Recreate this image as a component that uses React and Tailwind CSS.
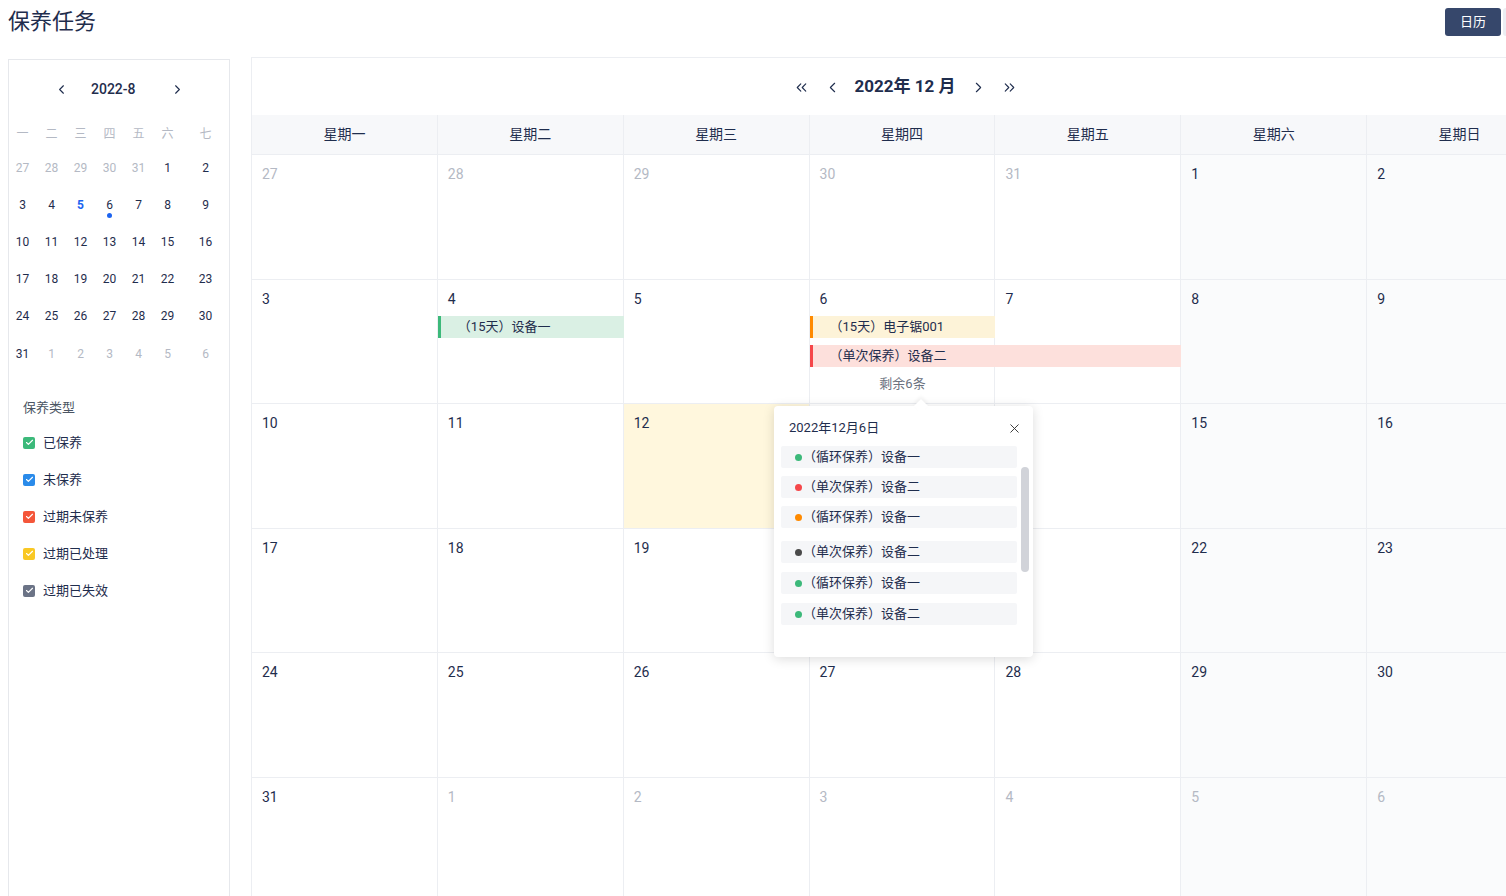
import React from "react";
import {
  ChevronLeft,
  ChevronRight,
  ChevronsLeft,
  ChevronsRight,
  X,
  Check,
} from "lucide-react";

const FONT = "font-['Roboto','Noto_Sans_CJK_SC',sans-serif]";

const colStart = [
  "col-start-1",
  "col-start-2",
  "col-start-3",
  "col-start-4",
  "col-start-5",
  "col-start-6",
  "col-start-7",
];

const weekNames = ["星期一", "星期二", "星期三", "星期四", "星期五", "星期六", "星期日"];

// December 2022, Monday first; "hidden" cells sit under the day popover
const weeks = [
  [27, 28, 29, 30, 31, 1, 2].map((d, i) => ({ d, out: i < 5 })),
  [3, 4, 5, 6, 7, 8, 9].map((d) => ({ d })),
  [10, 11, 12, 13, 14, 15, 16].map((d) => ({ d, today: d === 12, hidden: d === 13 })),
  [17, 18, 19, 20, 21, 22, 23].map((d) => ({ d, hidden: d === 20 })),
  [24, 25, 26, 27, 28, 29, 30].map((d) => ({ d })),
  [31, 1, 2, 3, 4, 5, 6].map((d, i) => ({ d, out: i > 0 })),
];

const eventStyles = {
  green: "bg-[#daf0e4] border-[#3cb97a]",
  yellow: "bg-[#fdf3d8] border-[#ff8a00]",
  red: "bg-[#fde0dc] border-[#f5474a]",
};

const events = {
  1: [
    { col: 1, span: "col-span-1", row: "row-start-2", text: "（15天）设备一", type: "green" },
    { col: 3, span: "col-span-1", row: "row-start-2", text: "（15天）电子锯001", type: "yellow" },
    { col: 3, span: "col-span-2", row: "row-start-3", text: "（单次保养）设备二", type: "red" },
  ],
};

const popItems = [
  { text: "（循环保养）设备一", dot: "bg-[#3cb97a]", mt: "" },
  { text: "（单次保养）设备二", dot: "bg-[#f5474a]", mt: "mt-[8px]" },
  { text: "（循环保养）设备一", dot: "bg-[#ff8a00]", mt: "mt-[8px]" },
  { text: "（单次保养）设备二", dot: "bg-[#4a4a4a]", mt: "mt-[13px]" },
  { text: "（循环保养）设备一", dot: "bg-[#3cb97a]", mt: "mt-[9px]" },
  { text: "（单次保养）设备二", dot: "bg-[#3cb97a]", mt: "mt-[9px]" },
];

const miniHead = ["一", "二", "三", "四", "五", "六", "七"];
const miniWeeks = [
  [27, 28, 29, 30, 31, 1, 2].map((d, i) => ({ d, out: i < 5 })),
  [3, 4, 5, 6, 7, 8, 9].map((d) => ({ d })),
  [10, 11, 12, 13, 14, 15, 16].map((d) => ({ d })),
  [17, 18, 19, 20, 21, 22, 23].map((d) => ({ d })),
  [24, 25, 26, 27, 28, 29, 30].map((d) => ({ d })),
  [31, 1, 2, 3, 4, 5, 6].map((d, i) => ({ d, out: i > 0 })),
];

const legend = [
  { label: "已保养", color: "bg-[#3cb97a]" },
  { label: "未保养", color: "bg-[#2a8bea]" },
  { label: "过期未保养", color: "bg-[#f4563a]" },
  { label: "过期已处理", color: "bg-[#f9c824]" },
  { label: "过期已失效", color: "bg-[#6b7386]" },
];

const MiniCalendar = () => (
  <div className="ml-2 mt-px w-[222px] shrink-0 border border-[#e6e8ec] border-b-0 h-[900px]">
    <div className="h-[58px] flex items-center pl-[45px] text-[#1f2d4d]">
      <ChevronLeft size={15} strokeWidth={1.8} />
      <span className="ml-[22px] mr-[34px] text-[14px] font-medium">2022-8</span>
      <ChevronRight size={15} strokeWidth={1.8} />
    </div>
    <div className="grid grid-cols-[repeat(6,29px)_1fr] -ml-px">
      {miniHead.map((h) => (
        <div key={h} className="h-[31px] flex items-center justify-center text-[12px] text-[#b4b9c4]">
          {h}
        </div>
      ))}
      {miniWeeks.flat().map((c, i) => {
        const selected = !c.out && c.d === 5 && i < 14;
        const marked = !c.out && c.d === 6 && i < 14;
        return (
          <div
            key={i}
            className={`${i >= 35 ? "h-[40px]" : "h-[37px]"} flex items-center justify-center relative text-[12px] ${
              c.out ? "text-[#b4b9c4]" : selected ? "text-[#1d64f0] font-bold" : "text-[#1f2d4d]"
            }`}
          >
            {c.d}
            {marked && (
              <span className="absolute left-1/2 top-[27px] -ml-[2.5px] w-[5px] h-[5px] rounded-full bg-[#1d64f0]" />
            )}
          </div>
        );
      })}
    </div>
    <div className="px-[14px] mt-[24px]">
      <div className="text-[13px] leading-5 text-[#4b5563]">保养类型</div>
      <div className="mt-[6px]">
        {legend.map((l) => (
          <div key={l.label} className="h-[37px] flex items-center gap-[8px]">
            <span className={`w-[12px] h-[12px] rounded-[2px] flex items-center justify-center ${l.color}`}>
              <Check size={9} strokeWidth={3} color="#fff" />
            </span>
            <span className="text-[13px] text-[#1f2d4d]">{l.label}</span>
          </div>
        ))}
      </div>
    </div>
  </div>
);

const Popover = () => (
  <div className="absolute left-[522px] top-[348px] w-[259px] h-[251px] bg-white rounded-[4px] shadow-[0_2px_12px_rgba(0,0,0,0.14)] z-10">
    <span className="absolute -top-[5px] left-[142px] w-[10px] h-[10px] bg-white rotate-45 shadow-[-2px_-2px_4px_rgba(0,0,0,0.05)]" />
    <div className="relative flex items-center justify-between pt-[12px] pl-[15px] pr-[11px]">
      <span className="text-[13px] leading-5 text-[#1f2d4d]">2022年12月6日</span>
      <X size={15} strokeWidth={1.5} color="#333" />
    </div>
    <div className="relative flex mt-[8px] pl-[7px]">
      <div className="w-[236px]">
        {popItems.map((p, i) => (
          <div
            key={i}
            className={`h-[22px] flex items-center pl-[14px] gap-[1px] bg-[#f5f6f8] rounded-[2px] text-[13px] text-[#1f2d4d] ${p.mt}`}
          >
            <span className={`w-[7px] h-[7px] rounded-full ${p.dot}`} />
            <span>{p.text}</span>
          </div>
        ))}
      </div>
      <div className="ml-[4px] w-[8px]">
        <div className="mt-[21px] h-[105px] rounded-full bg-[#d1d3d9]" />
      </div>
    </div>
  </div>
);

const WeekRow = ({ days, index }) => (
  <div className="grid grid-cols-7 grid-rows-[36px_29px_29px_1fr] h-[124.5px] border-b border-[#eceef2]">
    {days.map((c, i) => (
      <div
        key={i}
        className={`${colStart[i]} row-start-1 row-end-5 border-r border-[#eceef2] pl-[10px] pt-[9px] text-[14px] leading-5 ${
          c.today ? "bg-[#fff7dd]" : i > 4 ? "bg-[#fafbfc]" : "bg-white"
        } ${c.out ? "text-[#b4b9c4]" : "text-[#1f2d4d]"}`}
      >
        {c.hidden ? null : c.d}
      </div>
    ))}
    {(events[index] || []).map((e, i) => (
      <div
        key={i}
        className={`${colStart[e.col]} ${e.span} ${e.row} h-[22px] border-l-[3px] pl-[17px] text-[13px] leading-[22px] text-[#1f2d4d] ${eventStyles[e.type]}`}
      >
        {e.text}
      </div>
    ))}
    {index === 1 && (
      <div className="col-start-4 row-start-4 text-center text-[13px] leading-5 text-[#6b7280]">
        剩余6条
      </div>
    )}
  </div>
);

const App = () => {
  return (
    <div className={`w-[1506px] h-[896px] overflow-hidden bg-white ${FONT}`}>
      <div className="w-[1553px]">
        <div className="h-[58px] flex items-start justify-between pl-2">
          <h1 className="mt-[7px] text-[22px] leading-[30px] text-[#1f2d4d]">保养任务</h1>
          <div className="mt-[8px] flex gap-[2px]">
            <button className="w-[56px] h-[28px] rounded-[3px] bg-[#36476b] text-white text-[13px]">日历</button>
            <div className="w-[50px] h-[28px] rounded-[3px] bg-[#eceef3]" />
          </div>
        </div>
        <div className="flex">
          <MiniCalendar />
          <div className="relative ml-[21px] w-[1302px] shrink-0 border-l border-t border-[#eceef2] -mt-px">
            <div className="h-[57px] pt-px flex items-center justify-center text-[#1f2d4d]">
              <ChevronsLeft size={17} strokeWidth={1.6} className="ml-[6px]" />
              <ChevronLeft size={17} strokeWidth={1.6} className="ml-[14px]" />
              <span className="ml-[14px] mr-[15px] text-[17px] font-bold">2022年 12 月</span>
              <ChevronRight size={17} strokeWidth={1.6} />
              <ChevronsRight size={17} strokeWidth={1.6} className="ml-[14px]" />
            </div>
            <div className="grid grid-cols-7 h-[40px] bg-[#f7f8fa] border-b border-[#eceef2]">
              {weekNames.map((w) => (
                <div
                  key={w}
                  className="flex items-center justify-center border-r border-[#eceef2] text-[14px] text-[#1f2d4d]"
                >
                  {w}
                </div>
              ))}
            </div>
            {weeks.map((days, i) => (
              <WeekRow key={i} days={days} index={i} />
            ))}
            <Popover />
          </div>
        </div>
      </div>
    </div>
  );
};

export default App;
